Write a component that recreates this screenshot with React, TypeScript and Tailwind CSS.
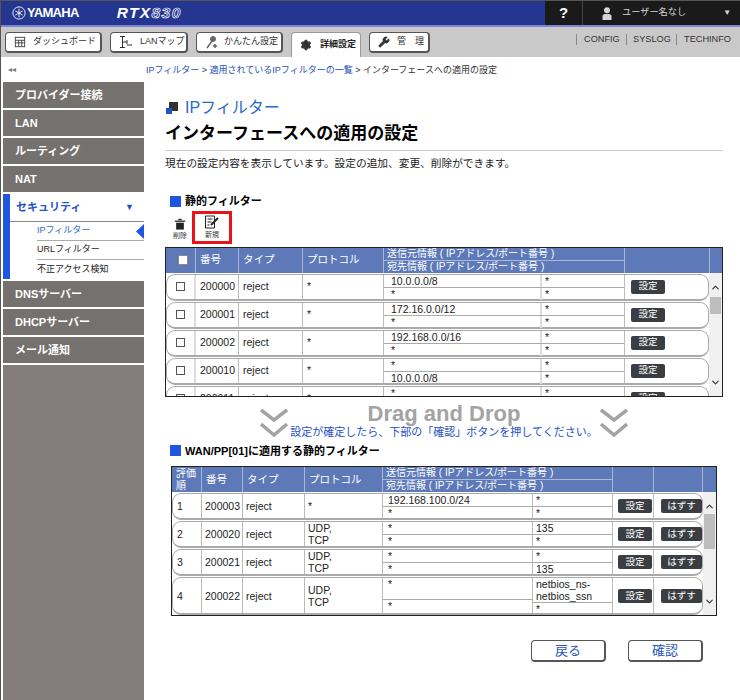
import { ChevronDown, ChevronUp, Settings, Wrench } from 'lucide-react';

const FONT = "font-['Liberation_Sans','Noto_Sans_CJK_JP',sans-serif]";

const sideTop = ['プロバイダー接続', 'LAN', 'ルーティング', 'NAT'];
const sideBottom = ['DNSサーバー', 'DHCPサーバー', 'メール通知'];

const staticRows = [
  ['200000', '10.0.0.0/8', '*'],
  ['200001', '172.16.0.0/12', '*'],
  ['200002', '192.168.0.0/16', '*'],
  ['200010', '*', '10.0.0.0/8'],
  ['200011', '*', '172.16.0.0/12'],
];

const appliedRows = [
  { no: '1', id: '200003', proto: '*', src: '192.168.100.0/24', dst: '*', sp: '*', dp: '*', h: 'h-[27px]' },
  { no: '2', id: '200020', proto: 'UDP,\nTCP', src: '*', dst: '*', sp: '135', dp: '*', h: 'h-[27px]' },
  { no: '3', id: '200021', proto: 'UDP,\nTCP', src: '*', dst: '*', sp: '*', dp: '135', h: 'h-[27px]' },
  { no: '4', id: '200022', proto: 'UDP,\nTCP', src: '*', dst: '*', sp: 'netbios_ns-\nnetbios_ssn', dp: '*', h: 'h-[38px]' },
];

function SideItem({ label }: { label: string }) {
  return (
    <div className="flex h-[26px] items-center bg-[#75716f] pl-3 text-[11px] font-bold text-white">{label}</div>
  );
}

function TabButton({ icon, label, w }: { icon: React.ReactNode; label: string; w: string }) {
  return (
    <div className={`flex h-[21px] items-center gap-[7px] whitespace-nowrap rounded-[4px] border border-[#555] border-b-2 border-r-2 bg-white pl-2 text-[9px] text-[#333] ${w}`}>
      {icon}
      <span>{label}</span>
    </div>
  );
}

function DarkButton({ label, w }: { label: string; w: string }) {
  return (
    <div className={`flex h-[14px] shrink-0 items-center justify-center rounded-[2px] bg-[#3a3d42] text-[9.5px] text-white ${w}`}>{label}</div>
  );
}

function Scrollbar({ thumb }: { thumb: string }) {
  return (
    <div className="flex w-[13px] shrink-0 flex-col items-center bg-[#f0f0f0]">
      <ChevronUp className="mt-[9px] h-[11px] w-[11px] text-[#333]" strokeWidth={2.5} />
      <div className={`w-[11px] bg-[#bdbdbd] ${thumb}`} />
      <div className="flex-1" />
      <ChevronDown className="mb-[9px] h-[11px] w-[11px] text-[#333]" strokeWidth={2.5} />
    </div>
  );
}

function HeadCell({ w, children }: { w: string; children?: React.ReactNode }) {
  return (
    <div className={`flex shrink-0 items-center border-r border-[#a9b8d8] pl-1 text-[10.5px] text-white ${w}`}>{children}</div>
  );
}

function InfoHead({ w }: { w: string }) {
  return (
    <div className={`flex shrink-0 flex-col border-r border-[#a9b8d8] text-[10px] leading-[12px] text-white ${w}`}>
      <div className="flex-1 border-b border-[#a9b8d8] pl-[3px]">送信元情報 ( IPアドレス/ポート番号 )</div>
      <div className="flex-1 pl-[3px]">宛先情報 ( IPアドレス/ポート番号 )</div>
    </div>
  );
}

function DoubleChevron() {
  return (
    <svg viewBox="0 0 28 28" className="h-[28px] w-[28px] shrink-0" fill="none" stroke="#a3a3a3" strokeWidth="3.5">
      <path d="M1 1 L14 11 L27 1" />
      <path d="M1 15 L14 26 L27 15" />
    </svg>
  );
}

function SectionTitle({ label }: { label: string }) {
  return (
    <div className="flex items-center gap-[4px] text-[11px] font-bold text-black">
      <div className="h-[11px] w-[11px] bg-[#1f55e0]" />
      {label}
    </div>
  );
}

export default function App() {
  return (
    <div className={`flex h-[700px] w-[740px] flex-col overflow-hidden border-l border-t border-[#555] bg-white ${FONT}`}>
      {/* header */}
      <div className="flex h-[26px] shrink-0 border-b-2 border-[#7f83d6] bg-[#24368f]">
        <div className="flex w-[544px] items-center pl-[11px]">
          <svg viewBox="0 0 16 16" className="h-[14px] w-[14px] text-white" fill="none" stroke="currentColor" strokeWidth="1">
            <circle cx="8" cy="8" r="7" />
            <path d="M8 3v10M3.7 5.5l8.6 5M3.7 10.5l8.6-5" />
          </svg>
          <span className="ml-[1px] text-[13px] font-bold tracking-[-0.7px] text-white">YAMAHA</span>
          <span className="ml-[38px] text-[15.5px] font-bold italic tracking-[1.4px] text-white">
            RTX<span className="text-[#24368f] [-webkit-text-stroke:0.7px_#fff]">830</span>
          </span>
        </div>
        <div className="flex flex-1 items-center bg-[#1a1a1a] text-[#d5d5d5]">
          <div className="flex h-full w-[38px] items-center justify-center border-r border-[#444] text-[15px] font-bold text-white">?</div>
          <svg viewBox="0 0 10 13" className="ml-[19px] h-[13px] w-[10px]" fill="#d5d5d5">
            <circle cx="5" cy="3.2" r="3" />
            <path d="M0.5 13V9.5Q0.5 7 3 7H7Q9.5 7 9.5 9.5V13Z" />
          </svg>
          <span className="ml-[10px] text-[9.2px]">ユーザー名なし</span>
          <span className="ml-[37px] text-[8px]">▼</span>
        </div>
      </div>

      {/* tabs */}
      <div className="flex h-[30px] shrink-0 items-start justify-between bg-[#c9c9c9] pl-[4px] pr-[9px] text-[#333]">
        <div className="mt-[5px] flex gap-[8px]">
          <TabButton
            w="w-[97px]"
            label="ダッシュボード"
            icon={
              <svg viewBox="0 0 14 14" className="h-[12px] w-[12px] shrink-0" fill="none" stroke="#333">
                <rect x="1.5" y="1.5" width="11" height="11" />
                <path d="M1.5 5h11M1.5 8h11M5.5 5v7M9 5v7" />
              </svg>
            }
          />
          <TabButton
            w="w-[78px]"
            label="LANマップ"
            icon={
              <svg viewBox="0 0 14 14" className="h-[14px] w-[14px] shrink-0" fill="none" stroke="#333">
                <path d="M1 1.5h5M3.5 1.5v11M1 12.5h5M3.5 7H8M8 5v4M8 10h5" />
              </svg>
            }
          />
          <TabButton
            w="w-[87px]"
            label="かんたん設定"
            icon={
              <svg viewBox="0 0 14 14" className="-mr-[2px] h-[14px] w-[14px] shrink-0" fill="#666" stroke="#666">
                <circle cx="8" cy="4" r="2.5" />
                <path d="M7 6 L2 13 M10 9v4M8 11h4" strokeWidth="1.5" />
              </svg>
            }
          />
          <div className="flex h-[25px] w-[70px] shrink-0 items-center gap-[8px] whitespace-nowrap rounded-t-[4px] border border-b-0 border-[#999] bg-white pb-[1px] pl-2 text-[9px] font-bold text-[#222]">
            <Settings className="h-[12px] w-[12px] fill-[#333] text-[#333]" />
            詳細設定
          </div>
          <TabButton
            w="w-[61px]"
            label="管　理"
            icon={<Wrench className="h-[12px] w-[12px] shrink-0 fill-[#333] text-[#333]" />}
          />
        </div>
        <div className="mt-[7px] flex text-[9.2px] leading-[11px]">
          <span className="w-[50px] border-l border-[#888] pl-[7px]">CONFIG</span>
          <span className="w-[50px] border-l border-[#888] pl-[6px]">SYSLOG</span>
          <span className="border-l border-[#888] pl-[7px]">TECHINFO</span>
        </div>
      </div>

      <div className="flex flex-1">
        {/* sidebar */}
        <div className="flex w-[143px] shrink-0 flex-col pl-[2px]">
          <div className="h-[25px] pl-[5px] pt-[8px] text-[8px] leading-[10px] text-[#777]">◂◂</div>
          <div className="flex flex-1 flex-col bg-[#827d7b]">
            <div className="flex flex-col gap-[2px] bg-white pb-[2px]">
              {sideTop.map((s) => (
                <SideItem key={s} label={s} />
              ))}
              <div className="flex border-l-[7px] border-[#1f55e0] bg-white">
                <div className="flex flex-1 flex-col">
                  <div className="flex h-[28px] items-center justify-between border-b border-[#888] pl-[6px] pr-[10px] text-[11px] font-bold text-[#1f55c8]">
                    セキュリティ
                    <span className="text-[9px]">▼</span>
                  </div>
                  <div className="relative ml-[27px] flex h-[19px] items-center border-b border-[#aaa] text-[9px] text-[#2a6ac8]">
                    IPフィルター
                    <div className="absolute right-0 top-[2px] h-[15px] w-[8px] bg-[#1f55e0] [clip-path:polygon(100%_0,100%_100%,0_50%)]" />
                  </div>
                  <div className="ml-[27px] flex h-[19px] items-center border-b border-[#aaa] text-[9px] text-[#222]">URLフィルター</div>
                  <div className="ml-[27px] flex h-[19px] items-center text-[9px] text-[#222]">不正アクセス検知</div>
                </div>
              </div>
              {sideBottom.map((s) => (
                <SideItem key={s} label={s} />
              ))}
            </div>
          </div>
        </div>

        {/* main */}
        <div className="flex flex-1 flex-col pl-[21px] pr-[17px]">
          <div className="-ml-[19px] h-[25px] pt-[8px] text-[9px] leading-[11px] text-[#333]">
            <span className="text-[#2450b8]">IPフィルター</span> &gt; <span className="text-[#2450b8]">適用されているIPフィルターの一覧</span> &gt; インターフェースへの適用の設定
          </div>

          <div className="mt-[15px] flex items-center gap-[7px] pl-[1px] text-[16px] leading-[22px] text-[#2a6ac8]">
            <div className="relative h-[12px] w-[12px]">
              <div className="absolute right-0 top-0 h-[9px] w-[9px] bg-[#333]" />
              <div className="absolute bottom-0 left-0 h-[6px] w-[6px] bg-[#1f55c8]" />
            </div>
            IPフィルター
          </div>
          <div className="mt-[2px] h-[30px] border-b border-[#ccc] text-[17px] font-bold leading-[26px] text-black">
            インターフェースへの適用の設定
          </div>
          <div className="mt-[5px] text-[10.7px] leading-[14px] text-[#222]">
            現在の設定内容を表示しています。設定の追加、変更、削除ができます。
          </div>

          <div className="mt-[23px] pl-[5px]">
            <SectionTitle label="静的フィルター" />
          </div>

          {/* toolbar */}
          <div className="mt-[1px] flex h-[33px] items-end">
            <div className="flex w-[27px] flex-col items-center pb-[4px] pl-[3px] text-[7px] leading-[8px] text-[#333]">
              <svg viewBox="0 0 14 14" className="h-[12px] w-[12px]" fill="#222">
                <rect x="1" y="3" width="12" height="1.5" />
                <rect x="5" y="1" width="4" height="1.5" />
                <path d="M2.5 5.5h9v8h-9z" />
              </svg>
              <span className="mt-[2px]">削除</span>
            </div>
            <div className="flex h-[33px] w-[40px] flex-col items-center justify-center border-[3px] border-[#e8141c] text-[7px] leading-[8px] text-[#333]">
              <svg viewBox="0 0 16 14" className="h-[14px] w-[16px]" fill="none" stroke="#222">
                <path d="M1.5 1h9v12h-9zM3.5 4h5M3.5 7h4M3.5 10h2" />
                <path d="M7 10 L14 3" strokeWidth="2" />
              </svg>
              <span className="mt-[2px]">新規</span>
            </div>
          </div>

          {/* static filter table */}
          <div className="mt-[3px] h-[150px] overflow-hidden border border-[#222]">
            <div className="flex h-[25px] bg-[#5d79b8]">
              <HeadCell w="w-[30px]">
                <div className="ml-[8px] h-[10px] w-[10px] rounded-[1px] border border-[#888] bg-white" />
              </HeadCell>
              <HeadCell w="w-[43px]">番号</HeadCell>
              <HeadCell w="w-[64px]">タイプ</HeadCell>
              <HeadCell w="w-[81px]">プロトコル</HeadCell>
              <InfoHead w="w-[241px]" />
              <HeadCell w="w-[85px]" />
              <div className="flex-1" />
            </div>
            <div className="flex h-[124px]">
              <div className="flex flex-1 flex-col gap-[1px] overflow-hidden pt-[1px]">
                {staticRows.map((r) => (
                  <div key={r[0]} className="flex h-[27px] shrink-0 rounded-[9px] border border-b-2 border-[#aaa] text-[10.5px] text-[#222]">
                    <div className="flex w-[29px] shrink-0 items-center justify-center border-r-2 border-[#ddd]">
                      <div className="h-[9px] w-[9px] border border-[#555]" />
                    </div>
                    <div className="flex w-[43px] shrink-0 items-center border-r border-[#bbb] pl-[4px]">{r[0]}</div>
                    <div className="flex w-[64px] shrink-0 items-center border-r border-[#bbb] pl-[4px]">reject</div>
                    <div className="flex w-[81px] shrink-0 items-center border-r border-[#bbb] pl-[4px]">*</div>
                    <div className="flex w-[241px] shrink-0 flex-col border-r border-[#bbb] leading-[12px]">
                      {[r[1], r[2]].map((v, i) => (
                        <div key={i} className={`flex flex-1 ${i === 0 ? 'border-b border-[#aaa]' : ''}`}>
                          <div className="w-[158px] border-r-2 border-[#ddd] pl-[7px]">{v}</div>
                          <div className="pl-[3px]">*</div>
                        </div>
                      ))}
                    </div>
                    <div className="flex flex-1 items-center pl-[6px]">
                      <DarkButton label="設定" w="w-[34px]" />
                    </div>
                  </div>
                ))}
              </div>
              <Scrollbar thumb="mt-[4px] h-[17px]" />
            </div>
          </div>

          {/* drag and drop */}
          <div className="mt-[12px] flex pl-[95px] pr-[95px]">
            <DoubleChevron />
            <div className="-mt-[4px] flex flex-1 flex-col items-center">
              <div className="text-[22px] font-bold leading-[18px] text-[#a3a3a3]">Drag and Drop</div>
              <div className="mt-[2px] whitespace-nowrap text-[11px] leading-[15px] text-[#2450c8]">設定が確定したら、下部の「確認」ボタンを押してください。</div>
            </div>
            <DoubleChevron />
          </div>

          <div className="mt-[3px] pl-[5px]">
            <SectionTitle label="WAN/PP[01]に適用する静的フィルター" />
          </div>

          {/* applied table */}
          <div className="ml-[6px] mr-[6px] mt-[7px] h-[150px] overflow-hidden border border-[#222]">
            <div className="flex h-[25px] bg-[#5d79b8]">
              <HeadCell w="w-[30px]">
                <span className="text-[10px] leading-[12px]">評価順</span>
              </HeadCell>
              <HeadCell w="w-[41px]">番号</HeadCell>
              <HeadCell w="w-[62px]">タイプ</HeadCell>
              <HeadCell w="w-[78px]">プロトコル</HeadCell>
              <InfoHead w="w-[230px]" />
              <HeadCell w="w-[41px]" />
              <HeadCell w="w-[49px]" />
              <div className="flex-1" />
            </div>
            <div className="flex h-[124px]">
              <div className="flex flex-1 flex-col gap-[1px] overflow-hidden pt-[1px]">
                {appliedRows.map((r) => (
                  <div key={r.no} className={`flex shrink-0 rounded-[9px] border border-b-2 border-[#aaa] text-[10.5px] leading-[12px] text-[#222] ${r.h}`}>
                    <div className="flex w-[29px] shrink-0 items-center border-r border-[#bbb] pl-[4px]">{r.no}</div>
                    <div className="flex w-[41px] shrink-0 items-center border-r border-[#bbb] pl-[3px]">{r.id}</div>
                    <div className="flex w-[62px] shrink-0 items-center border-r border-[#bbb] pl-[3px]">reject</div>
                    <div className="flex w-[78px] shrink-0 items-center whitespace-pre-line border-r border-[#bbb] pl-[3px]">{r.proto}</div>
                    <div className="flex w-[230px] shrink-0 border-r border-[#bbb]">
                      <div className="flex w-[150px] flex-col border-r border-[#bbb]">
                        <div className="flex-1 border-b border-[#aaa] pl-[5px]">{r.src}</div>
                        <div className="h-[13px] shrink-0 pl-[5px]">{r.dst}</div>
                      </div>
                      <div className="flex flex-1 flex-col">
                        <div className="flex-1 whitespace-pre-line border-b border-[#aaa] pl-[3px]">{r.sp}</div>
                        <div className="h-[13px] shrink-0 pl-[3px]">{r.dp}</div>
                      </div>
                    </div>
                    <div className="flex w-[41px] shrink-0 items-center border-r border-[#bbb] pl-[5px]">
                      <DarkButton label="設定" w="w-[34px]" />
                    </div>
                    <div className="flex flex-1 items-center justify-end">
                      <DarkButton label="はずす" w="w-[41px]" />
                    </div>
                  </div>
                ))}
              </div>
              <Scrollbar thumb="mt-[2px] h-[35px]" />
            </div>
          </div>

          {/* footer buttons */}
          <div className="mt-[24px] flex justify-end gap-[22px] pr-[20px]">
            <div className="flex h-[22px] w-[75px] items-center justify-center rounded-[4px] border border-b-2 border-r-2 border-[#555] text-[13px] text-[#2a55b8]">戻る</div>
            <div className="flex h-[22px] w-[75px] items-center justify-center rounded-[4px] border border-b-2 border-r-2 border-[#555] text-[13px] text-[#2a55b8]">確認</div>
          </div>
        </div>
      </div>
    </div>
  );
}
